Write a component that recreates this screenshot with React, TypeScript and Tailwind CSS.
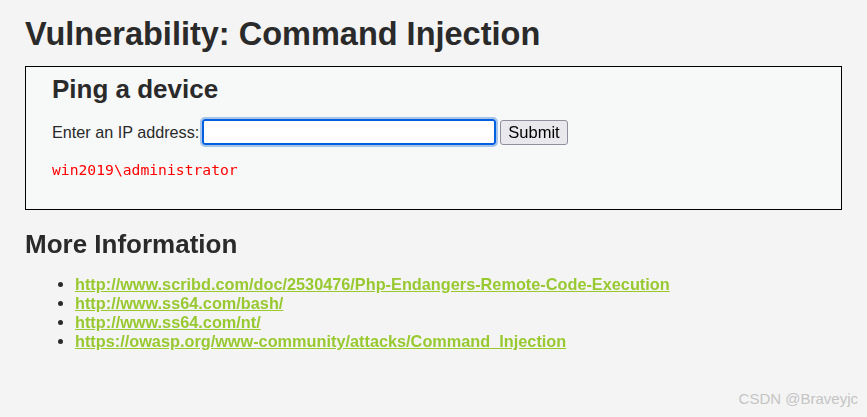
export default function App() {
  const links = [
    'http://www.scribd.com/doc/2530476/Php-Endangers-Remote-Code-Execution',
    'http://www.ss64.com/bash/',
    'http://www.ss64.com/nt/',
    'https://owasp.org/www-community/attacks/Command_Injection',
  ]

  return (
    <div className="relative h-[417px] w-[867px] overflow-hidden bg-[#f4f4f4] font-['Liberation_Sans',Arial,sans-serif] text-[#2a2a2a]">
      <div className="pl-[25px] pr-[25px] pt-[14px]">
        <h1 className="text-[32.5px] font-bold leading-[40px]">Vulnerability: Command Injection</h1>

        {/* Ping box */}
        <div className="mt-[12px] h-[144px] border border-black bg-[#f7f8f8] pl-[26px] pt-[8px]">
          <h2 className="text-[26px] font-bold leading-[28px]">Ping a device</h2>
          <form className="mt-[16px] flex items-center" onSubmit={(e) => e.preventDefault()}>
            <label className="text-[16.2px] leading-[20px]">Enter an IP address:</label>
            <input
              type="text"
              autoFocus
              className="ml-[3px] h-[26px] w-[294px] rounded-[3px] border-2 border-[#0060df] bg-white px-[4px] text-[16px] outline outline-2 outline-[#a7c4ea] focus:outline-[#a7c4ea]"
            />
            <button
              type="submit"
              className="ml-[4px] h-[25px] rounded-[3px] border border-[#8f8f9d] bg-[#e9e9ed] px-[7px] text-[16.5px] leading-[20px] text-black"
            >
              Submit
            </button>
          </form>
          <pre className="mt-[16px] font-['DejaVu_Sans_Mono',monospace] text-[14.7px] leading-[18px] text-[#ff0000]">
            win2019\administrator
          </pre>
        </div>

        <h2 className="mt-[19px] text-[26px] font-bold leading-[30px]">More Information</h2>
        <ul className="mt-[16px] list-disc pl-[50px] text-[16.3px] leading-[19px] marker:text-[#2a2a2a]">
          {links.map((l) => (
            <li key={l}>
              <a href="#" className="font-bold text-[#98c931] underline">
                {l}
              </a>
            </li>
          ))}
        </ul>
      </div>

      {/* watermark */}
      <div className="absolute bottom-[7px] right-[9px] text-[15px] text-[#c4c4c4]">CSDN @Braveyjc</div>
    </div>
  )
}
